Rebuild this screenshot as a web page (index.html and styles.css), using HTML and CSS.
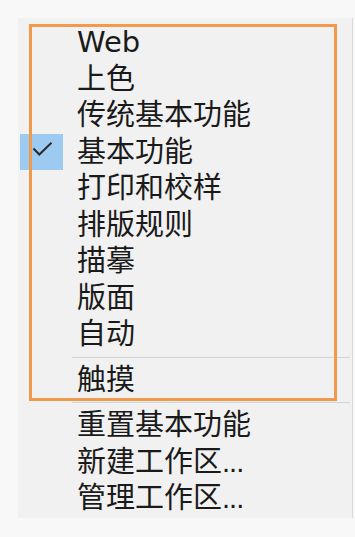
FILE: index.html
```html
<!DOCTYPE html>
<html lang="zh-CN">
<head>
<meta charset="utf-8">
<title>工作区菜单</title>
<link rel="stylesheet" href="styles.css">
</head>
<body>
<div class="menu">
  <ul class="list">
    <li class="item"><span class="mark"></span><span class="label">Web</span></li>
    <li class="item"><span class="mark"></span><span class="label">上色</span></li>
    <li class="item"><span class="mark"></span><span class="label">传统基本功能</span></li>
    <li class="item checked"><span class="mark"><svg width="43" height="36" viewBox="0 0 43 36"><path d="M13.5 14.5 L19.3 20.5 L31.5 8.8" fill="none" stroke="#2b2b2b" stroke-width="2"/></svg></span><span class="label">基本功能</span></li>
    <li class="item"><span class="mark"></span><span class="label">打印和校样</span></li>
    <li class="item"><span class="mark"></span><span class="label">排版规则</span></li>
    <li class="item"><span class="mark"></span><span class="label">描摹</span></li>
    <li class="item"><span class="mark"></span><span class="label">版面</span></li>
    <li class="item"><span class="mark"></span><span class="label">自动</span></li>
    <li class="sep"></li>
    <li class="item"><span class="mark"></span><span class="label">触摸</span></li>
    <li class="sep"></li>
    <li class="item"><span class="mark"></span><span class="label">重置基本功能</span></li>
    <li class="item"><span class="mark"></span><span class="label">新建工作区<span class="ell">...</span></span></li>
    <li class="item"><span class="mark"></span><span class="label">管理工作区<span class="ell">...</span></span></li>
  </ul>
  <div class="annot"></div>
</div>
</body>
</html>
```
FILE: styles.css
```css
html, body {
  margin: 0;
  padding: 0;
}
body {
  background: #f8f8f8;
  width: 355px;
  height: 537px;
  overflow: hidden;
  font-family: "DejaVu Sans", "Noto Sans CJK SC", sans-serif;
  color: #1a1a1a;
}
.menu {
  position: relative;
  margin: 18px 0 0 18px;
  width: 334px;
  background: #f1f1f1;
  border-right: 1px solid #d8d8d8;
  padding-top: 6px;
  padding-bottom: 1px;
}
.list {
  list-style: none;
  margin: 0;
  padding: 0;
}
.item {
  display: flex;
  align-items: center;
  height: 36.5px;
  font-size: 29px;
  line-height: 36.5px;
  padding-left: 2px;
}
.mark {
  width: 43px;
  height: 36px;
  flex: none;
  display: flex;
}
.checked .mark {
  background: #9ccaf1;
}
.label {
  margin-left: 14px;
  white-space: nowrap;
}
.ell {
  font-family: "Liberation Sans", sans-serif;
  letter-spacing: -1px;
}
.sep {
  height: 9px;
  display: flex;
  align-items: center;
  padding-left: 54px;
  padding-right: 2px;
}
.sep::before {
  content: "";
  display: block;
  flex: 1;
  height: 1px;
  background: #d3d3d3;
}
.annot {
  position: absolute;
  left: 11px;
  top: 6px;
  width: 302px;
  height: 371px;
  border: 3px solid #f29a4c;
  pointer-events: none;
}
```
